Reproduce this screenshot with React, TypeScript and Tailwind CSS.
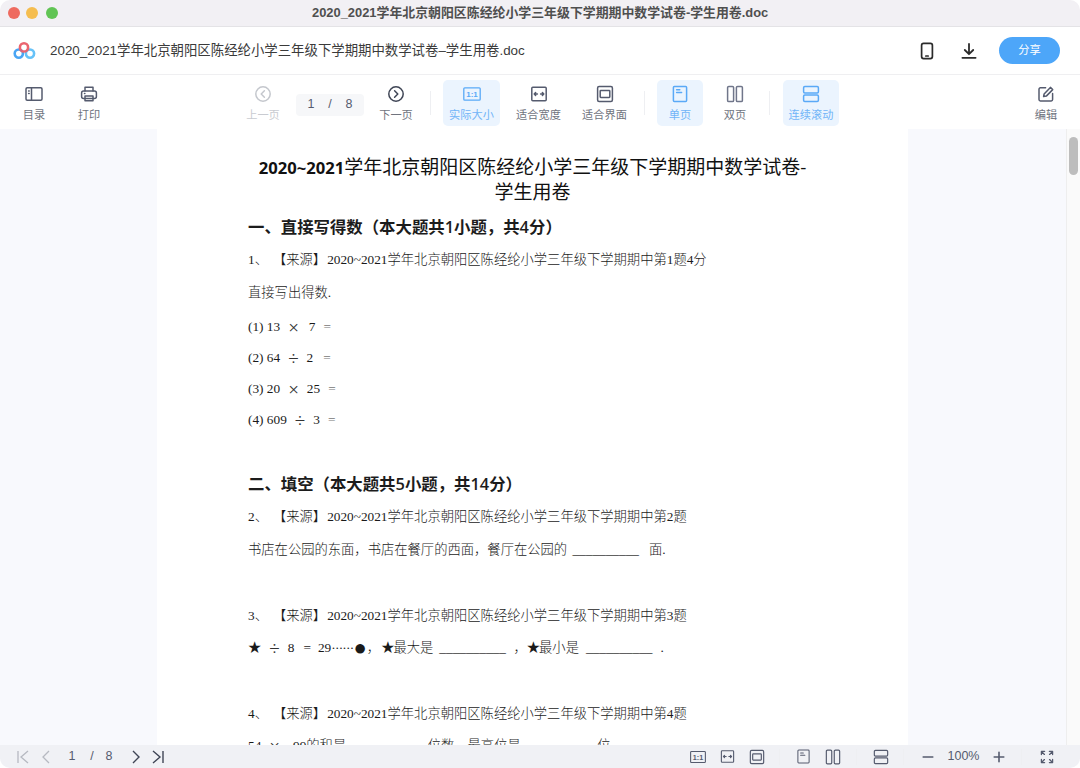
import React from "react";

const S = { fill: "none", strokeLinecap: "round" as const, strokeLinejoin: "round" as const };

function Ico({ size = 20, color = "#555b6e", sw = 1.5, children }: { size?: number; color?: string; sw?: number; children: React.ReactNode }) {
  return (
    <svg width={size} height={size} viewBox="0 0 20 20" stroke={color} strokeWidth={sw} {...S}>
      {children}
    </svg>
  );
}

const Toc = () => (<><rect x="2" y="3.8" width="16" height="12.4" rx="1.2" /><path d="M7.5 3.8v12.4M4.6 7h.6M4.6 9.5h.6" /></>);
const Print = () => (<><path d="M6 7V3.2h8V7" /><rect x="2.6" y="7" width="14.8" height="7.5" rx="2" /><path d="M6 12v4.8h8V12z" /><path d="M5.5 9.6h.4" /></>);
const Prev = () => (<><circle cx="10" cy="10" r="7.2" /><path d="M11.4 6.8L8.2 10l3.2 3.2" /></>);
const Next = () => (<><circle cx="10" cy="10" r="7.2" /><path d="M8.6 6.8l3.2 3.2-3.2 3.2" /></>);
const Actual = ({ c }: { c: string }) => (
  <>
    <rect x="1.8" y="3.8" width="16.4" height="12.4" rx="1" />
    <text x="10" y="12.9" textAnchor="middle" fontSize="8" fontWeight="700" stroke="none" fill={c} fontFamily="Liberation Sans, sans-serif">1:1</text>
  </>
);
const FitW = () => (<><rect x="2.8" y="3.2" width="14.4" height="13.6" rx="1" /><path d="M5.2 10h3.2M11.6 10h3.2M6.6 8.6L5.2 10l1.4 1.4M13.4 8.6l1.4 1.4-1.4 1.4" /></>);
const FitP = () => (<><rect x="2.6" y="2.6" width="14.8" height="14.8" rx="1.5" /><rect x="5.2" y="6.6" width="9.6" height="6.8" rx=".6" /></>);
const Single = () => (<><rect x="3.4" y="2.4" width="13.2" height="15.2" rx="1" /><path d="M6.6 5.8h3.2M6.6 8.4h5" /></>);
const Double = () => (<><rect x="2.6" y="2.4" width="6" height="15.2" rx="1.2" /><rect x="11.4" y="2.4" width="6" height="15.2" rx="1.2" /></>);
const Cont = () => (<><rect x="2.6" y="2.6" width="14.8" height="6.4" rx="1.2" /><rect x="2.6" y="11" width="14.8" height="6.4" rx="1.2" /></>);
const Edit = () => (<><path d="M16.6 9.5v6a1.4 1.4 0 0 1-1.4 1.4H4.4A1.4 1.4 0 0 1 3 15.5V5.2a1.4 1.4 0 0 1 1.4-1.4h5.2" /><path d="M7.6 12.6l.5-2.6 6.3-6.6 2.3 2.2-6.4 6.5z" /></>);

function Tool({ label, width = "w-[44px]", margin = "", active = false, disabled = false, icon }: {
  label: string; width?: string; margin?: string; active?: boolean; disabled?: boolean; icon: React.ReactNode;
}) {
  const text = active ? "text-[#71b4f8]" : disabled ? "text-[#c9cbd1]" : "text-[#70747e]";
  return (
    <div className={`flex h-[46px] flex-col items-center justify-end rounded-[5px] pb-[3px] ${width} ${margin} ${active ? "bg-[#ebf4fe]" : ""}`}>
      <div className="mb-[3px] flex h-[20px] items-center">{icon}</div>
      <span className={`text-[11.2px] leading-[16px] whitespace-nowrap ${text}`}>{label}</span>
    </div>
  );
}

const Sep = ({ margin = "" }: { margin?: string }) => <div className={`h-[24px] w-px bg-[#eeeff2] ${margin}`} />;

const Blue = "#5aa9f7";
const Gray = "#555b6e";

function Sec({ children }: { children: React.ReactNode }) {
  return <div className="flex h-[23px] w-[29px] items-center justify-center">{children}</div>;
}

const L = ({ h, children, cls = "" }: { h: string; children: React.ReactNode; cls?: string }) => (
  <div className={`flex items-center whitespace-pre text-[13.3px] text-[#1a1a1a] font-light ${h} ${cls}`}>{children}</div>
);

const Op = ({ c, m }: { c: string; m: string }) => <span className={`text-[19px] leading-none text-[#333] ${m}`}>{c}</span>;
const Eq = ({ m }: { m: string }) => <span className={`text-[#777] ${m}`}>=</span>;

const head = "text-[16.4px] font-semibold text-[#1c1c1c] font-['Open_Sans','Noto_Sans_CJK_SC',sans-serif]";
const Src = ({ n, extra = "" }: { n: string; extra?: string }) => (
  <>{n}、<span className="ml-[5px]">【来源】</span><span className="ml-[1px]">2020~2021学年北京朝阳区陈经纶小学三年级下学期期中第{n}题{extra}</span></>
);

export default function App() {
  return (
    <div className="h-[768px] w-[1080px] overflow-hidden bg-white">
      <div className="flex h-[768px] w-[1080px] flex-col overflow-hidden rounded-[10px] bg-white font-['Liberation_Sans','Noto_Sans_CJK_SC',sans-serif]">
        {/* title bar */}
        <div className="flex h-[27px] shrink-0 items-center border-b border-[#e4e3e6] bg-[#f2f0f4] pl-[7.5px]">
          <div className="h-[12px] w-[12px] rounded-full bg-[#ee6a5f]" />
          <div className="ml-[6.5px] h-[12px] w-[12px] rounded-full bg-[#f5bd4f]" />
          <div className="ml-[7.5px] h-[12px] w-[12px] rounded-full bg-[#61c454]" />
          <div className="ml-[254.5px] text-[12.9px] font-bold whitespace-nowrap text-[#4f4f4f]">
            2020_2021学年北京朝阳区陈经纶小学三年级下学期期中数学试卷-学生用卷.doc
          </div>
        </div>

        {/* header */}
        <div className="flex h-[48px] shrink-0 items-center border-b border-[#efeff1] pl-[13px] pr-[20px]">
          <svg width="23" height="20" viewBox="0 0 23 20" fill="none" strokeWidth="2.6">
            <circle cx="5.8" cy="12.6" r="4.1" stroke="#4aa5f4" />
            <circle cx="17" cy="12.6" r="4.1" stroke="#66c2f8" />
            <circle cx="11" cy="6.4" r="4.1" stroke="#ea6570" />
            <path d="M8 9.6a4.1 4.1 0 0 1 .2 .2" stroke="#7f69d8" />
          </svg>
          <div className="ml-[14px] pt-[1px] text-[13.4px] whitespace-nowrap text-[#3a3a3a]">
            2020_2021学年北京朝阳区陈经纶小学三年级下学期期中数学试卷–学生用卷.doc
          </div>
          <div className="ml-auto flex items-center">
            <svg width="20" height="20" viewBox="0 0 20 20" fill="none" stroke="#2b2b2b" strokeWidth="1.7" strokeLinecap="round">
              <rect x="4.6" y="2.4" width="10.8" height="15.2" rx="2" />
              <path d="M8.8 15h2.4" />
            </svg>
            <svg className="ml-[22px]" width="20" height="20" viewBox="0 0 20 20" fill="none" stroke="#2b2b2b" strokeWidth="1.8" strokeLinecap="round" strokeLinejoin="round">
              <path d="M10 3v10M5.8 9l4.2 4.2L14.2 9M3.4 16.8h13.2" />
            </svg>
            <div className="ml-[20px] flex h-[27px] w-[61px] items-center justify-center rounded-full bg-[#4da6f9] text-[11.3px] text-white">分享</div>
          </div>
        </div>

        {/* toolbar */}
        <div className="flex h-[54px] shrink-0 items-center pl-[12px] pr-[12px] pt-[1px]">
          <Tool label="目录" icon={<Ico><Toc /></Ico>} />
          <Tool label="打印" margin="ml-[11px]" icon={<Ico><Print /></Ico>} />
          <Tool label="上一页" margin="ml-[130px]" disabled icon={<Ico color="#c4c7cd"><Prev /></Ico>} />
          <div className="ml-[11px] mt-[4px] flex h-[22px] w-[68px] items-center justify-center rounded-[4px] bg-[#f6f7f9] text-[12.5px] text-[#555b6e] whitespace-pre">1    /    8</div>
          <Tool label="下一页" margin="ml-[10px]" icon={<Ico color="#3f4555"><Next /></Ico>} />
          <Sep margin="ml-[12px]" />
          <Tool label="实际大小" width="w-[57px]" margin="ml-[12px]" active icon={<Ico color={Blue} sw={1.3}><Actual c={Blue} /></Ico>} />
          <Tool label="适合宽度" width="w-[57px]" margin="ml-[10px]" icon={<Ico><FitW /></Ico>} />
          <Tool label="适合界面" width="w-[57px]" margin="ml-[9px]" icon={<Ico><FitP /></Ico>} />
          <Sep margin="ml-[11px]" />
          <Tool label="单页" width="w-[46px]" margin="ml-[12px]" active icon={<Ico color={Blue}><Single /></Ico>} />
          <Tool label="双页" width="w-[46px]" margin="ml-[9px]" icon={<Ico color="#70768a"><Double /></Ico>} />
          <Sep margin="ml-[11px]" />
          <Tool label="连续滚动" width="w-[56px]" margin="ml-[13px]" active icon={<Ico color={Blue}><Cont /></Ico>} />
          <Tool label="编辑" margin="ml-auto" icon={<Ico><Edit /></Ico>} />
        </div>

        {/* content */}
        <div className="flex h-[616px] shrink-0 overflow-hidden bg-[#f8f9fd]">
          <div className="w-[157px] shrink-0" />
          <div className="w-[751px] shrink-0 overflow-hidden bg-white pl-[91px] pr-[80px] pt-[26px] font-['Liberation_Serif','Noto_Sans_CJK_SC',serif]">
            <div className="-ml-[20px] -mr-[9px] text-center text-[19px] leading-[25px] font-normal text-[#111] font-['Open_Sans','Noto_Sans_CJK_SC',sans-serif]">
              <b className="text-[16.6px] font-bold">2020~2021</b>学年北京朝阳区陈经纶小学三年级下学期期中数学试卷-
              <br />
              学生用卷
            </div>
            <L h="h-[23px] mt-[11px]" cls={head}>一、直接写得数（本大题共1小题，共4分）</L>
            <L h="h-[20px] mt-[11px]"><Src n="1" extra="4分" /></L>
            <L h="h-[20px] mt-[13px]">直接写出得数.</L>
            <L h="h-[20px] mt-[14px]">(1) 13<Op c="×" m="ml-[8px]" /><span className="ml-[10px]">7</span><Eq m="ml-[8px]" /></L>
            <L h="h-[20px] mt-[11px]">(2) 64<Op c="÷" m="ml-[8px]" /><span className="ml-[8px]">2</span><Eq m="ml-[10px]" /></L>
            <L h="h-[20px] mt-[11px]">(3) 20<Op c="×" m="ml-[8px]" /><span className="ml-[8px]">25</span><Eq m="ml-[8px]" /></L>
            <L h="h-[20px] mt-[11px]">(4) 609<Op c="÷" m="ml-[8px]" /><span className="ml-[8px]">3</span><Eq m="ml-[8px]" /></L>
            <L h="h-[23px] mt-[43px]" cls={head}>二、填空（本大题共5小题，共14分）</L>
            <L h="h-[20px] mt-[11px]"><Src n="2" /></L>
            <L h="h-[20px] mt-[13px]">书店在公园的东面，书店在餐厅的西面，餐厅在公园的 <span className="ml-[2px]">__________</span><span className="ml-[10px]">面.</span></L>
            <L h="h-[20px] mt-[46px]"><Src n="3" /></L>
            <L h="h-[20px] mt-[12px]">
              ★<Op c="÷" m="ml-[8px]" /><span className="ml-[8px]">8</span><span className="ml-[9px]">=</span><span className="ml-[7px]">29</span>
              <span className="tracking-[-0.7px]">······</span><span className="text-[22px] leading-none">●</span>
              <span>，</span><span className="ml-[1px]">★</span><span className="-ml-[1px]">最大是</span>
              <span className="ml-[6px]">__________</span><span className="ml-[1px]">  ，</span><span>★</span><span className="-ml-[1px]">最小是</span>
              <span className="ml-[7px]">__________</span><span className="ml-[8px]">.</span>
            </L>
            <L h="h-[20px] mt-[46px]"><Src n="4" /></L>
            <L h="h-[20px] mt-[12px]">54<Op c="×" m="ml-[8px]" /><span className="ml-[13px]">99的和是</span><span className="ml-[8px]">__________</span><span className="ml-[7px]">位数，最高位是</span><span className="ml-[8px]">__________</span><span className="ml-[2px]">位.</span></L>
          </div>
          <div className="flex-1" />
          <div className="w-[14px] shrink-0 border-l border-[#eeeeee] bg-[#fafafa] pl-[2px] pt-[8px]">
            <div className="h-[38px] w-[9px] rounded-full bg-[#bdbdbd]" />
          </div>
        </div>

        {/* status bar */}
        <div className="flex h-[23px] shrink-0 items-center bg-[#f0f1f5] pl-[8px] pr-[19px] text-[#555b6e]">
          <Sec><svg width="16" height="16" viewBox="0 0 16 16" fill="none" stroke="#b6b9c1" strokeWidth="1.3"><path d="M3 2v12M13 2L6 8l7 6" /></svg></Sec>
          <div className="-ml-[6px]"><Sec><svg width="16" height="16" viewBox="0 0 16 16" fill="none" stroke="#b6b9c1" strokeWidth="1.3"><path d="M11 2L5 8l6 6" /></svg></Sec></div>
          <span className="ml-[8px] w-[8px] text-center text-[12.5px]">1</span>
          <span className="ml-[12px] w-[8px] text-center text-[12.5px]">/</span>
          <span className="ml-[9px] w-[8px] text-center text-[12.5px]">8</span>
          <div className="ml-[8px]"><Sec><svg width="16" height="16" viewBox="0 0 16 16" fill="none" stroke="#3f4555" strokeWidth="1.4"><path d="M5 2l6 6-6 6" /></svg></Sec></div>
          <div className="-ml-[7px]"><Sec><svg width="16" height="16" viewBox="0 0 16 16" fill="none" stroke="#3f4555" strokeWidth="1.4"><path d="M3 2l7 6-7 6M13 2v12" /></svg></Sec></div>

          <div className="ml-auto flex items-center">
            <Sec><Ico size={18} sw={1.2}><Actual c={Gray} /></Ico></Sec>
            <div className="ml-[1px]"><Sec><Ico size={17} sw={1.3}><FitW /></Ico></Sec></div>
            <Sec><Ico size={18} sw={1.3}><FitP /></Ico></Sec>
            <Sep margin="ml-[8px] !h-[16px]" />
            <div className="ml-[9px]"><Sec><Ico size={17} sw={1.2}><Single /></Ico></Sec></div>
            <Sec><Ico size={18} sw={1.3}><Double /></Ico></Sec>
            <Sep margin="ml-[9px] !h-[16px]" />
            <div className="ml-[9px]"><Sec><Ico size={18} sw={1.3}><Cont /></Ico></Sec></div>
            <Sep margin="ml-[8px] !h-[16px]" />
            <div className="ml-[9px]"><Sec><Ico size={16} sw={2}><path d="M4 10h12" /></Ico></Sec></div>
            <span className="ml-[4px] w-[35px] text-center text-[12.5px] whitespace-nowrap">100%</span>
            <div className="ml-[3px]"><Sec><Ico size={16} sw={2}><path d="M4 10h12M10 4v12" /></Ico></Sec></div>
            <Sep margin="ml-[8px] !h-[16px]" />
            <div className="ml-[10px]"><Sec>
              <Ico size={16} sw={1.6}><path d="M3 7V3h4M17 7V3h-4M3 13v4h4M17 13v4h-4M3.4 3.4l3.4 3.4M16.6 3.4l-3.4 3.4M3.4 16.6l3.4-3.4M16.6 16.6l-3.4-3.4" /></Ico>
            </Sec></div>
          </div>
        </div>
      </div>
    </div>
  );
}
